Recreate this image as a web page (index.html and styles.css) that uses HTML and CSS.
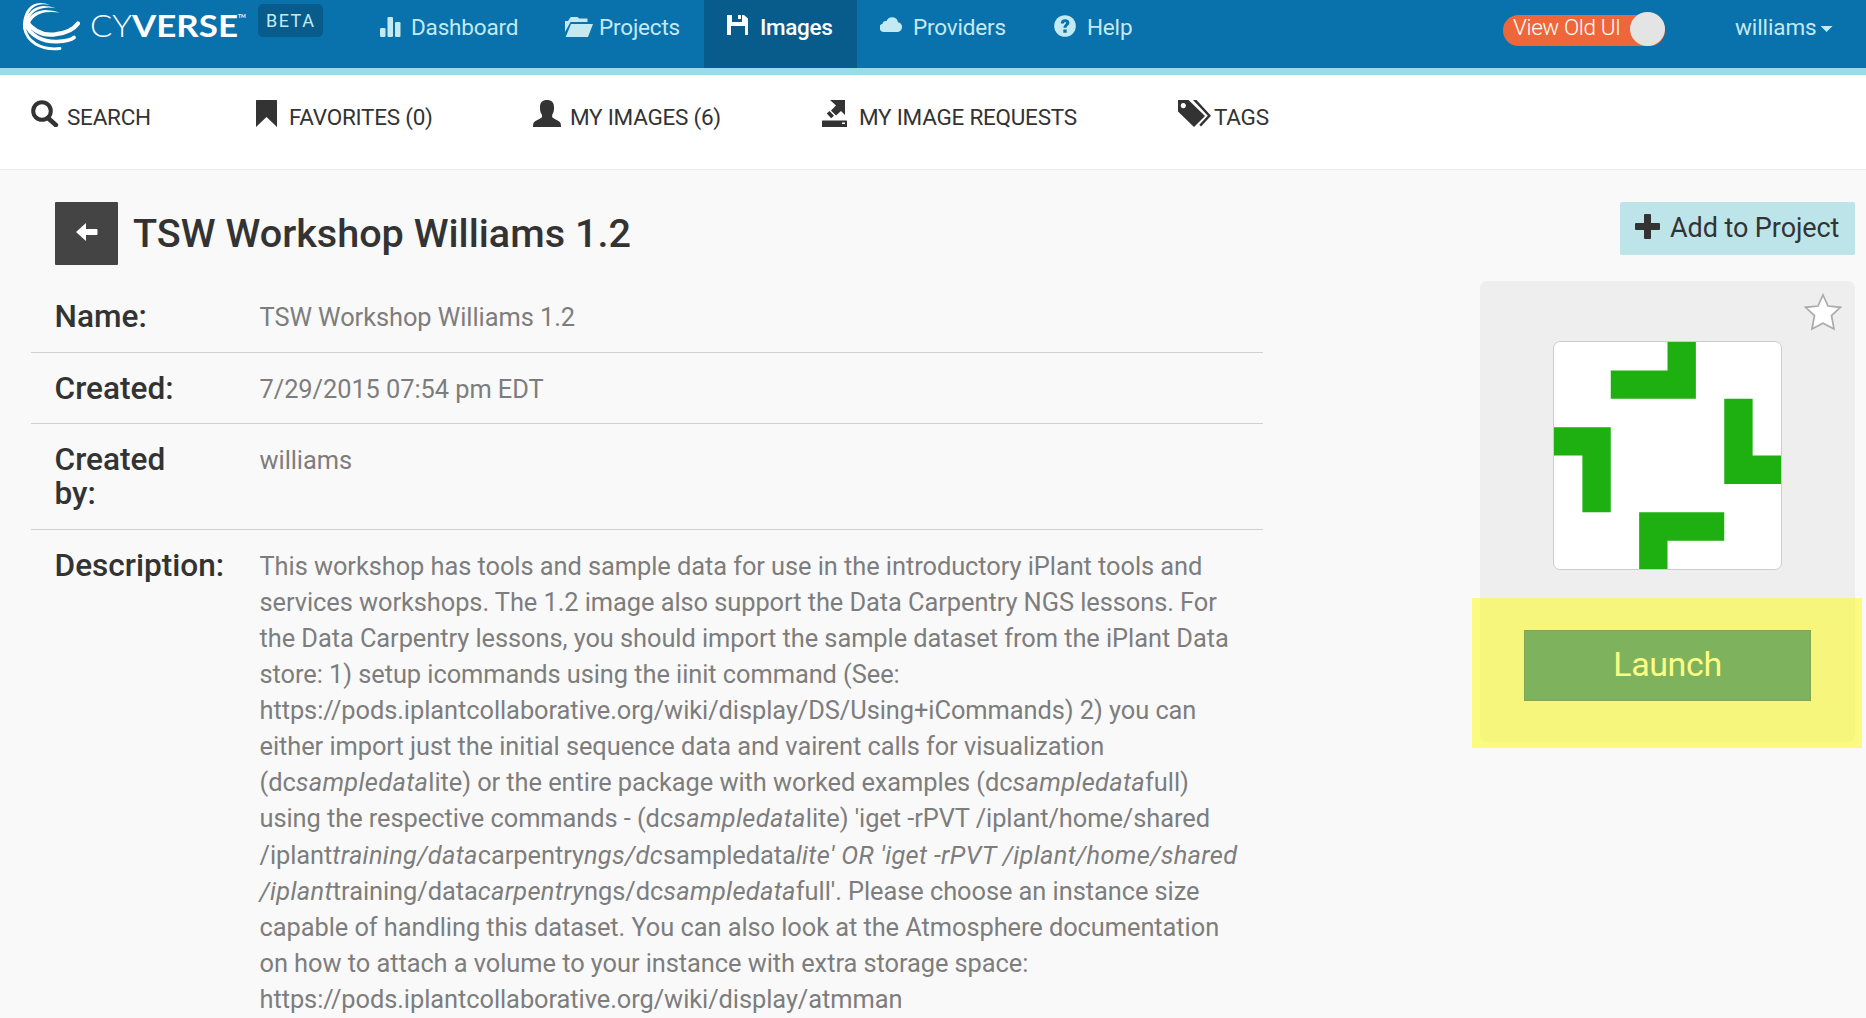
FILE: index.html
```html
<!DOCTYPE html>
<html lang="en">
<head>
<meta charset="utf-8">
<title>TSW Workshop Williams 1.2</title>
<link rel="stylesheet" href="styles.css">
</head>
<body>
<header class="topbar">
  <a class="brand">
    <svg width="225" height="52" viewBox="0 0 225 52">
      <g fill="none" stroke="#fff" stroke-linecap="round">
        <path d="M3 21C11 32 22 36 33 34.200C43 33 51 29 55 23.500" stroke-width="4.200"/>
        <path d="M2 23C7 36 20 42 34 41.600C42 41.200 48 40 51 37.500" stroke-width="3.600"/>
        <path d="M1.200 26C3 42 18 50.500 37 48.500" stroke-width="2.800"/>
      </g>
      <g fill="#fff">
        <path d="M0 30C-1 14 6 3 17 3q5 0 10 1.800-6-1-10-.4C8 6 3 15 2.500 25z"/>
        <path d="M1 25C3 13 11 6.500 20 6q7 0 13 2.200-7-1-12-.3C12 9 6 15 4.500 24z"/>
        <path d="M2 25C5 16 13 10.500 22 10q8 0 15 2.500-8-1-14-.2C15 13.500 8 18 6.500 25z"/>
      </g>
      <g fill="#fff" font-family="Lato, sans-serif" font-size="31">
        <text x="67" y="37.300" font-weight="300" textLength="42" lengthAdjust="spacingAndGlyphs">CY</text>
        <text x="109" y="37.300" font-weight="700" textLength="106" lengthAdjust="spacingAndGlyphs">VERSE</text>
        <text x="215" y="18" font-weight="700" font-size="5">TM</text>
      </g>
    </svg>
  </a>
  <span class="beta">BETA</span>
  <nav class="mainnav">
    <a class="n-dash"><svg width="21" height="20" viewBox="0 0 21 20"><rect y="11" width="5.500" height="9" rx="1.300"/><rect x="7.500" width="5.500" height="20" rx="1.300"/><rect x="15" y="5" width="5.500" height="15" rx="1.300"/></svg><span>Dashboard</span></a>
    <a class="n-proj"><svg width="28" height="20" viewBox="0 0 28 20"><path d="M0 15V4h3l2-3q.5-1 1.500-1H12q1.500 0 2 1.500h8.500V5H5.500z"/><path d="M6 7h22l-5 13H.7z"/></svg><span>Projects</span></a>
    <a class="n-img active"><svg width="21" height="20" viewBox="0 0 21 20"><path d="M0 0h5v7h10V0h2l4 3.500V20h-3v-9H4v9H0z"/><path d="M11 0h3v4h-3z"/></svg><span>Images</span></a>
    <a class="n-prov"><svg width="23" height="15" viewBox="0 0 23 15"><path d="M4 15a4.200 4.200 0 0 1-1.500-8.200A3.500 3.500 0 0 1 6.500 4 6 6 0 0 1 18 5.200a5 5 0 0 1 0 9.800z"/></svg><span>Providers</span></a>
    <a class="n-help"><svg width="22" height="22" viewBox="0 0 22 22"><circle cx="11" cy="11" r="10.800"/><path d="M6.800 8.500q.2-4.200 4.300-4.200 4.300 0 4.300 3.600 0 1.800-1.700 2.800-1.200.7-1.200 2H9.400q0-2.200 1.600-3.300 1.100-.7 1-1.600 0-.9-1-.9-1.100 0-1.200 1.600zM9.300 14.500h3.400v3.200H9.300z" class="cut"/></svg><span>Help</span></a>
  </nav>
  <div class="toggle"><span>View Old UI</span><i></i></div>
  <div class="user"><span>williams</span><i></i></div>
</header>

<nav class="subnav">
  <a class="s-search"><svg width="28" height="27" viewBox="0 0 28 27"><circle cx="11" cy="11" r="8.800" fill="none" stroke="#333" stroke-width="4"/><path d="M17 18l7.800 7" stroke="#333" stroke-width="4.600" stroke-linecap="round"/></svg><span>SEARCH</span></a>
  <a class="s-fav"><svg width="21" height="27" viewBox="0 0 21 27"><path d="M0 .5Q0 0 .5 0h20q.5 0 .5.500V27L10.500 17 0 27z"/></svg><span>FAVORITES (0)</span></a>
  <a class="s-mine"><svg width="28" height="27" viewBox="0 0 28 27"><path d="M14 0c4.500 0 7 2.500 7 7v2c0 2.500-1.200 4.500-1.800 6v2c0 1 6.800 3.600 8 5.500.6 1 .8 2.500.8 4.500H0c0-2 .2-3.500.8-4.500C2 20.600 9 18 9 17v-2C8.200 13.500 7 11.500 7 9V7c0-4.500 2.500-7 7-7z"/></svg><span>MY IMAGES (6)</span></a>
  <a class="s-req"><svg width="25" height="27" viewBox="0 0 25 27"><path d="M8 0h15v15l-4-4-5 4.500-5-5 5-5zM7.500 11l4.500 4.800-2.800 2.500-4.500-4.800z"/><path fill-rule="evenodd" d="M.5 20.500h24q.5 0 .5.500v6H0v-6q0-.5.500-.5zM20 22.500v1.500h3v-1.500z"/></svg><span>MY IMAGE REQUESTS</span></a>
  <a class="s-tags"><svg width="33" height="27" viewBox="0 0 33 27"><path fill-rule="evenodd" d="M0 0h10.500L27 16 16 27 0 11.500zM5.300 3a2.600 2.600 0 1 0 .01 0z"/><path d="M15 0h3.500L33 15.700 23 26.500l-1.700-1.700 8.500-9z"/></svg><span>TAGS</span></a>
</nav>

<main class="page">
  <section class="details">
    <div class="heading">
      <a class="back"><svg width="22" height="18" viewBox="0 0 22 18"><path d="M0 9L10 0v6h10.500q1 0 1 1v4q0 1-1 1H10v6z"/></svg></a>
      <h1>TSW Workshop Williams 1.2</h1>
    </div>
    <dl class="rows">
      <div class="row first"><dt>Name:</dt><dd>TSW Workshop Williams 1.2</dd></div>
      <div class="row"><dt>Created:</dt><dd>7/29/2015 07:54 pm EDT</dd></div>
      <div class="row tall"><dt>Created by:</dt><dd>williams</dd></div>
      <div class="row last"><dt>Description:</dt><dd>This workshop has tools and sample data for use in the introductory iPlant tools and<br>services workshops. The 1.2 image also support the Data Carpentry NGS lessons. For<br>the Data Carpentry lessons, you should import the sample dataset from the iPlant Data<br>store: 1) setup icommands using the iinit command (See:<br>https://pods.iplantcollaborative.org/wiki/display/DS/Using+iCommands) 2) you can<br>either import just the initial sequence data and vairent calls for visualization<br>(dc<em>sampledata</em>lite) or the entire package with worked examples (dc<em>sampledata</em>full)<br>using the respective commands - (dc<em>sampledata</em>lite) 'iget -rPVT /iplant/home/shared<br>/iplant<em>training/data</em>carpentry<em>ngs/dc</em>sampledata<em>lite' OR 'iget -rPVT /iplant/home/shared<br>/iplant</em>training/data<em>carpentry</em>ngs/dc<em>sampledata</em>full'. Please choose an instance size<br>capable of handling this dataset. You can also look at the Atmosphere documentation<br>on how to attach a volume to your instance with extra storage space:<br>https://pods.iplantcollaborative.org/wiki/display/atmman</dd></div>
    </dl>
  </section>

  <aside class="side">
    <a class="add"><svg width="25" height="25" viewBox="0 0 25 25"><path d="M10 0h5q1 0 1 1v8h8q1 0 1 1v5q0 1-1 1h-8v8q0 1-1 1h-5q-1 0-1-1v-8H1q-1 0-1-1v-5q0-1 1-1h8V1q0-1 1-1z"/></svg><span>Add to Project</span></a>
    <div class="card">
      <svg class="star" width="38" height="38" viewBox="0 0 38 38"><path d="M19 2l5 11 12.500 1.300-9 8.200L30 36l-11-5.800L8 36l2.500-13.500-9-8.200L14 13z"/></svg>
      <svg class="avatar" viewBox="0 0 8 8"><path d="M4 0h1v2H2V1h2zM6 2h1v2h1v1H6zM0 3h2v3H1V4H0zM3 6h3v1H4v1H3z"/></svg>
      <a class="launch">Launch</a>
      <div class="marker"></div>
    </div>
  </aside>
</main>
</body>
</html>
```
FILE: styles.css
```css
* { box-sizing: border-box; }
body {
  margin: 0;
  height: 1018px;
  overflow: hidden;
  background: #f9f9f9;
  color: #333;
  font-family: Roboto, sans-serif;
}
svg { display: block; flex: none; }

/* top bar */
.topbar {
  display: flex;
  align-items: flex-start;
  height: 75px;
  background: #0971ab;
  border-bottom: 7px solid #9bdaea;
  color: #c3eaf2;
  font-size: 22.500px;
  line-height: 54px;
  letter-spacing: -.18px;
  white-space: nowrap;
}
.brand { width: 235px; margin-left: 23px; letter-spacing: 0; }
.beta {
  width: 65px;
  height: 33px;
  margin-top: 4px;
  padding-left: 8px;
  border-radius: 5px;
  background: #085c8b;
  font-size: 18px;
  line-height: 33px;
  letter-spacing: 1.500px;
}
.mainnav { display: flex; margin-left: 34px; }
.mainnav a { display: flex; height: 68px; }
.mainnav svg { fill: #c3eaf2; margin-top: 17px; }
.mainnav .cut { fill: #0971ab; }
.n-dash { width: 185px; padding-left: 23px; gap: 10px; }
.n-proj { width: 162px; padding-left: 23px; gap: 6px; }
.n-img { width: 153px; padding-left: 23px; gap: 12px; }
.n-prov { width: 174px; padding-left: 23px; gap: 10px; }
.n-help { width: 150px; padding-left: 23px; gap: 11px; }
.mainnav .active { background: #085c8b; color: #fff; font-weight: 500; letter-spacing: -.35px; }
.mainnav .active svg { fill: #fff; margin-top: 15px; }
.mainnav .n-help svg { margin-top: 15px; }
.toggle {
  display: flex;
  justify-content: space-between;
  width: 162px;
  height: 31px;
  margin: 15px 0 0 322px;
  padding-left: 10px;
  border-radius: 16px;
  background: #ee673a;
  color: #fff;
  font-weight: 300;
  line-height: 25px;
  letter-spacing: -.4px;
}
.toggle i { width: 35px; height: 34px; margin-top: -3px; border-radius: 50%; background: #e4e4e4; }
.user { display: flex; gap: 4px; margin-left: 70px; letter-spacing: -.1px; }
.user i {
  width: 12px;
  height: 6px;
  margin-top: 26px;
  background: #c3eaf2;
  clip-path: polygon(0 0, 100% 0, 50% 100%);
}

/* section links */
.subnav {
  display: flex;
  height: 95px;
  background: #fff;
  border-bottom: 1px solid #ebebeb;
  font-size: 22.500px;
  line-height: 85px;
  letter-spacing: -.25px;
  white-space: nowrap;
}
.subnav a { display: flex; }
.subnav svg { margin-top: 25px; fill: #333; }
.s-search { width: 225px; margin-left: 31px; gap: 8px; }
.s-fav { width: 277px; gap: 12px; }
.s-mine { width: 289px; gap: 9px; }
.s-req { width: 356px; gap: 12px; }
.s-tags { gap: 3px; }

/* page body */
.page { display: flex; padding: 32px 11px 0 31px; }
.details { width: 1232px; }
.heading { display: flex; height: 63px; padding-left: 24px; }
.back {
  display: flex;
  justify-content: center;
  width: 63px;
  height: 63px;
  padding-top: 21px;
  border-radius: 1px;
  background: #444;
}
.back svg { fill: #fff; }
h1 {
  margin: 0 0 0 15px;
  font-size: 39.600px;
  font-weight: 500;
  line-height: 63px;
}
.rows { margin: 16px 0 0; }
.row {
  display: flex;
  height: 71px;
  padding: 18px 0 0 23.500px;
  border-bottom: 1px solid #d0d0d0;
}
.row.first { height: 72px; }
.row.tall { height: 106px; }
.row.last { height: auto; border: 0; }
dt {
  width: 150px;
  margin: 1px 55px 0 0;
  font-size: 31.600px;
  font-weight: 500;
  line-height: 34px;
}
.row.last dt { white-space: nowrap; }
dd {
  margin: 0;
  color: #7d7d7d;
  font-size: 25.400px;
  line-height: 36.060px;
  letter-spacing: -.06px;
  white-space: nowrap;
}
em { letter-spacing: .33px; }

/* right column */
.side { display: flex; flex-direction: column; align-items: flex-end; width: 375px; margin-left: auto; }
.add {
  display: flex;
  gap: 10px;
  width: 235px;
  height: 53px;
  padding: 12px 0 0 15px;
  border-radius: 2px;
  background: #bde5e9;
  font-size: 27px;
  line-height: 29px;
  letter-spacing: -.08px;
  white-space: nowrap;
}
.add svg { fill: #333; }
.card {
  position: relative;
  display: flex;
  flex-direction: column;
  align-items: center;
  width: 375px;
  height: 461px;
  margin-top: 26px;
  padding-top: 12px;
  border-radius: 7px;
  background: #eee;
}
.star { align-self: flex-end; margin-right: 13px; fill: #fff; stroke: #aaa; stroke-width: 1.700; }
.avatar {
  width: 229px;
  height: 229px;
  margin-top: 10px;
  border: 1px solid #ccc;
  border-radius: 7px;
  background: #fff;
  fill: #1eb010;
}
.launch {
  width: 287px;
  height: 71px;
  margin-top: 60px;
  border: 1px solid #00509a;
  background: #0069ae;
  color: #fff;
  font-size: 34px;
  line-height: 66px;
  letter-spacing: -.4px;
  text-align: center;
}
.marker {
  position: absolute;
  left: -8px;
  top: 317px;
  width: 390px;
  height: 150px;
  background: rgba(253, 251, 10, .5);
}
```
